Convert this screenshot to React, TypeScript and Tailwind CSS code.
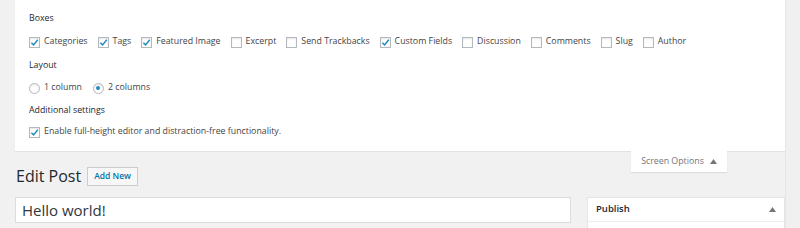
import React from "react";

const boxes: [string, boolean][] = [
  ["Categories", true],
  ["Tags", true],
  ["Featured Image", true],
  ["Excerpt", false],
  ["Send Trackbacks", false],
  ["Custom Fields", true],
  ["Discussion", false],
  ["Comments", false],
  ["Slug", false],
  ["Author", false],
];

function Check({ on }: { on: boolean }) {
  return (
    <span className="w-[11px] h-[11px] border border-[#b4b9be] bg-white shadow-[inset_0_1px_2px_rgba(0,0,0,0.1)] flex items-center justify-center shrink-0">
      {on && (
        <svg width="9" height="9" viewBox="0 0 10 10">
          <path d="M1.5 5.2 L4 7.6 L8.6 2" fill="none" stroke="#1e8cbe" strokeWidth="1.6" />
        </svg>
      )}
    </span>
  );
}

function Radio({ on }: { on: boolean }) {
  return (
    <span className="w-[11px] h-[11px] rounded-full border border-[#b4b9be] bg-white shadow-[inset_0_1px_2px_rgba(0,0,0,0.1)] flex items-center justify-center shrink-0">
      {on && <span className="w-[4px] h-[4px] rounded-full bg-[#1e8cbe]" />}
    </span>
  );
}

export default function App() {
  return (
    <div className="w-[800px] h-[228px] overflow-hidden bg-[#f1f1f1] flex text-[#444] font-['Open_Sans',sans-serif]">
      <div className="flex-1 pl-[15px] flex flex-col">
        <div className="shrink-0 bg-white shadow-[0_1px_1px_rgba(0,0,0,0.06)] h-[151px] pl-[14px] pt-[11px] text-[8.8px]">
          <div className="h-[14px] leading-[14px] text-[#23282d]">Boxes</div>
          <div className="flex items-center gap-[10px] mt-[10px] h-[14px]">
            {boxes.map(([label, on]) => (
              <label key={label} className="flex items-center gap-[4px]">
                <Check on={on} />
                <span>{label}</span>
              </label>
            ))}
          </div>
          <div className="h-[14px] leading-[14px] text-[#23282d] mt-[9px]">Layout</div>
          <div className="flex items-center gap-[11px] mt-[9px] h-[14px]">
            <label className="flex items-center gap-[4px]">
              <Radio on={false} />
              <span>1 column</span>
            </label>
            <label className="flex items-center gap-[4px]">
              <Radio on={true} />
              <span>2 columns</span>
            </label>
          </div>
          <div className="h-[14px] leading-[14px] text-[#23282d] mt-[8px]">Additional settings</div>
          <div className="flex items-center gap-[4px] mt-[8px] h-[14px]">
            <Check on={true} />
            <span>Enable full-height editor and distraction-free functionality.</span>
          </div>
        </div>
        <div className="shrink-0 flex justify-end pr-[58px]">
          <div className="bg-white shadow-[0_1px_1px_rgba(0,0,0,0.08)] w-[96px] h-[21px] flex items-center justify-center gap-[6px] text-[8.8px] text-[#72777c]">
            <span>Screen Options</span>
            <svg width="7" height="5" viewBox="0 0 7 5">
              <path d="M0 5 L3.5 0 L7 5 Z" fill="#72777c" />
            </svg>
          </div>
        </div>
        <div className="shrink-0 flex items-center gap-[6px] -mt-[6px] pl-[1px] h-[20px]">
          <span className="text-[16px] text-[#23282d] leading-none">Edit Post</span>
          <span className="h-[19px] px-[6px] border border-[#ccc] bg-[#f7f7f7] text-[#0073aa] text-[8.5px] font-semibold flex items-center">
            Add New
          </span>
        </div>
        <div className="shrink-0 flex mt-[11px] gap-[16px]">
          <div className="w-[556px] h-[26px] bg-white border border-[#ddd] flex items-center pl-[6px] text-[15px] text-[#32373c]">
            Hello world!
          </div>
          <div className="flex-1 bg-white border border-[#e5e5e5] h-[40px]">
            <div className="h-[24px] border-b border-[#eee] flex items-center justify-between px-[8px]">
              <span className="text-[9.5px] font-semibold text-[#23282d]">Publish</span>
              <svg width="7" height="5" viewBox="0 0 7 5">
                <path d="M0 5 L3.5 0 L7 5 Z" fill="#72777c" />
              </svg>
            </div>
          </div>
        </div>
      </div>
      <div className="w-[15px] bg-[#f0f0f0] border-l border-[#e6e6e6]" />
    </div>
  );
}
